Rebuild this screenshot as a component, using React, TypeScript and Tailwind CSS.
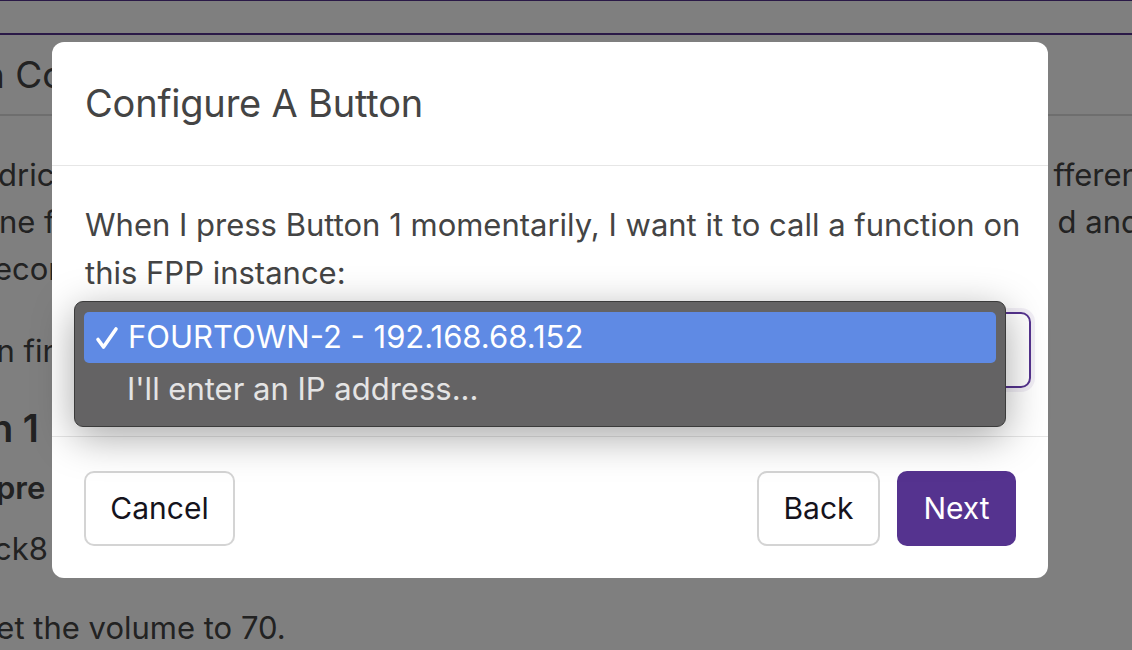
const font = "font-['Inter','Noto_Sans',sans-serif]";

// background page behind the modal, mostly hidden
const PageBehind = () => (
    <div className={`w-[1132px] text-[#444] ${font}`}>
        <div className="h-px bg-[#55338f]" />
        <div className="h-[32px]" />
        <div className="h-[2px] bg-[#55338f]" />
        <div className="flex h-[81px] items-center border-b-2 border-[#dcdcdc]">
            <span className="-ml-[26px] whitespace-nowrap text-[37px] leading-none">in Co</span>
        </div>
        <div className="pt-[35px] text-[31px] leading-[47px]">
            <div className="flex justify-between whitespace-nowrap">
                <span className="-ml-[2px]">dric</span>
                <span className="-mr-[18px]">fferent</span>
            </div>
            <div className="flex justify-between whitespace-nowrap">
                <span className="-ml-[1px]">ne f</span>
                <span className="-mr-[8px]">d and</span>
            </div>
            <div className="whitespace-nowrap">
                <span className="-ml-[6px] inline-block">econ</span>
            </div>
            <div className="mt-[35px] whitespace-nowrap">
                <span className="-ml-[11px] inline-block">in fin</span>
            </div>
            <div className="mt-[28px] whitespace-nowrap text-[38px] font-semibold leading-[52px]">
                <span className="-ml-[10px] inline-block">n 1</span>
            </div>
            <div className="mt-[10px] whitespace-nowrap font-semibold">
                <span className="-ml-[4px] inline-block">pre</span>
            </div>
            <div className="mt-[14px] whitespace-nowrap">
                <span className="-ml-[6px] inline-block">ck8</span>
            </div>
            <div className="mt-[32px] whitespace-nowrap">
                <span className="-ml-[20px] inline-block">set the volume to 70.</span>
            </div>
        </div>
    </div>
);

export default function App() {
    return (
        <div className="relative h-[650px] w-[1132px] overflow-hidden bg-white">
            <PageBehind />
            <div className="absolute inset-0 bg-black/50" />

            {/* modal */}
            <div className={`absolute left-[52px] top-[42px] w-[996px] rounded-[12px] bg-white text-[#444] ${font}`}>
                <div className="h-[124px] border-b border-[#e6e6e6] px-[33px] pt-[37px]">
                    <h5 className="text-[38px] leading-[48px] tracking-[-0.2px]">Configure A Button</h5>
                </div>

                <div className="px-[33px] pb-[48px] pt-[35px]">
                    <p className="whitespace-nowrap text-[31px] leading-[48px]">
                        When I press Button 1 momentarily, I want it to call a function on
                        <br />
                        this FPP instance:
                    </p>
                    <div className="relative mt-[15px] h-[76px] w-[946px] rounded-[10px] border-2 border-[#55338f] shadow-[0_0_0_4px_rgba(85,51,143,0.08)]">
                        {/* open native dropdown */}
                        <div className="absolute -left-[13px] -top-[13px] w-[932px] rounded-[9px] border border-[#3b3b3b] bg-[#646364] px-[9px] py-[10px] shadow-[0_10px_40px_rgba(0,0,0,0.35)]">
                            <div className="flex h-[51px] items-center rounded-[5px] bg-[#5f8ae4] pl-[11px] text-[31px] text-white">
                                <svg width="24" height="24" viewBox="0 0 24 24" className="mr-[9px]" fill="none" stroke="currentColor" strokeWidth="3.6" strokeLinecap="round" strokeLinejoin="round">
                                    <path d="M3 13.5 L8.5 21 L21 3" />
                                </svg>
                                <span>FOURTOWN-2 - 192.168.68.152</span>
                            </div>
                            <div className="flex h-[53px] items-center pl-[43px] text-[31px] text-[#e4e4e4]">
                                I'll enter an IP address...
                            </div>
                        </div>
                    </div>
                </div>

                <div className="flex items-center border-t border-[#e6e6e6] px-[32px] pb-[32px] pt-[34px] text-[30px]">
                    <button className="h-[75px] w-[151px] rounded-[10px] border-2 border-[#d4d4d4] bg-white text-[#15131c]">
                        Cancel
                    </button>
                    <div className="ml-auto flex gap-[17px]">
                        <button className="h-[75px] w-[123px] rounded-[10px] border-2 border-[#d4d4d4] bg-white text-[#15131c]">
                            Back
                        </button>
                        <button className="h-[75px] w-[119px] rounded-[10px] bg-[#55338f] text-white">
                            Next
                        </button>
                    </div>
                </div>
            </div>
        </div>
    );
}
